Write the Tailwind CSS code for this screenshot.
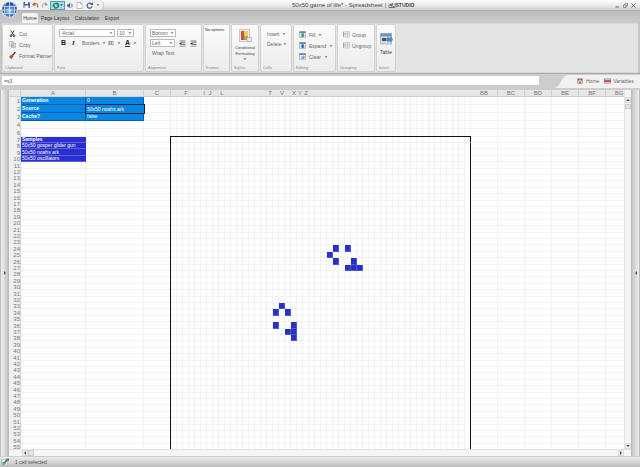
<!DOCTYPE html>
<html lang="en">
<head>
<meta charset="utf-8">
<title>50x50 game of life* - Spreadsheet</title>
<script src="https://cdn.jsdelivr.net/npm/@tailwindcss/browser@4"></script>
</head>
<body class="flex h-screen flex-col overflow-hidden bg-[#c6c6c6] font-['Liberation_Sans',Arial,sans-serif] text-[5px] leading-[6px] text-[#666]">
<svg class="hidden">
  <symbol id="down" viewBox="0 0 4 4"><path d="M.5 1.2h3L2 3z" fill="#777"/></symbol>
  <symbol id="indent" viewBox="0 0 12 12"><path d="M1 1h10v1.500H1zM5 4h6v1.500H5zM5 7h6v1.500H5zM1 10h10v1.300H1z" fill="#777"/><path d="M4.500 3.500v5.500L0 6.200z" fill="#444"/></symbol>
  <symbol id="pane" viewBox="0 0 16 16"><path d="M1 1h14v14H1z" fill="#f4f8fc" stroke="#6683a2"/><path d="M1 1h14v3.500H1z" fill="#5b80ac"/><path d="M5 4v11M10 4v11M1 8h14M1 12h14" stroke="#9fb3c8"/></symbol>
  <symbol id="grp" viewBox="0 0 16 16"><path d="M5 1h10v13H5zM5 5h10M5 9h10M10 1v13" fill="#fafafa" stroke="#999"/><path d="M3 2H1v11h2M1 7h3" fill="none" stroke="#666" stroke-width="1.300"/></symbol>
</svg>

<header class="relative shrink-0">
  <div class="flex h-[11px] items-center border-b border-[#adadad] bg-linear-to-b from-[#fdfdfd] via-[#ececec] to-[#cfcfcf]">
    <div class="flex h-[10px] w-[104px] items-center gap-[2px] rounded-r-full border-r border-[#c8c8c8] bg-[#f1f1f1] pl-[23px]">
      <button aria-label="Save"><svg class="h-[6px] w-[7px]" viewBox="0 0 14 12"><path d="M1 0h11l2 2v10H1z" fill="#4565ad"/><path d="M4 0h6v4H4zM3 7h8v5H3z" fill="#eef3fb"/></svg></button>
      <button aria-label="Undo"><svg class="h-[6px] w-[7px]" viewBox="0 0 14 12"><path d="M4 5c5-4 9 0 7 6" fill="none" stroke="#b5653a" stroke-width="2.500"/><path d="M0 6l5-6 2 8z" fill="#b5653a"/></svg></button>
      <button aria-label="Redo"><svg class="h-[6px] w-[7px]" viewBox="0 0 14 12"><path d="M10 5C5 1 1 5 3 11" fill="none" stroke="#999" stroke-width="2"/><path d="M14 6L9 0 7 8z" fill="#999"/></svg></button>
      <button class="flex h-[9px] w-[15px] items-center justify-center border border-[#4d9fb8] bg-[#a6dbe5]" aria-label="Refresh data"><svg class="h-[7px] w-[11px]" viewBox="0 0 18 12"><path d="M2 6c1-4 6-5 8-2M11 6c-1 5-6 5-8 3" fill="none" stroke="#26835d" stroke-width="2.500"/><path d="M9 1l4 5H7zM0 8l2-4 4 4z" fill="#26835d"/><path d="M14 4h4l-2 3z" fill="#333"/></svg></button>
      <div class="flex items-center gap-[3px]">
        <button aria-label="Play sound"><svg class="h-[5px] w-[6px]" viewBox="0 0 12 10"><path d="M0 3h2l4-3v10L2 7H0z" fill="#3b62a5"/><path d="M8 1c3 2 3 6 0 8" fill="none" stroke="#3b62a5" stroke-width="2"/></svg></button>
        <button aria-label="New"><svg class="h-[7px] w-[7px]" viewBox="0 0 12 14"><path d="M1 1h7l3 3v9H1z" fill="#fff" stroke="#888"/><path d="M8 1v3h3" fill="none" stroke="#888"/></svg></button>
        <button aria-label="Reload"><svg class="h-[7px] w-[7px]" viewBox="0 0 14 14"><path d="M11 4A5 5 0 1 0 12 9" fill="none" stroke="#4264a8" stroke-width="2.500"/><path d="M8 6h6V0z" fill="#4264a8"/></svg></button>
        <svg class="h-1 w-1"><use href="#down"/></svg>
      </div>
    </div>
    <h1 class="flex flex-1 items-center gap-[2px] pl-[188px] text-[6px] whitespace-nowrap text-[#444]"><span>50x50 game of life* - Spreadsheet</span><span>|</span><span class="flex items-center text-[5px] leading-[5px] font-bold"><span class="rounded-xs bg-[#666] text-white">CA</span>STUDIO</span></h1>
    <div class="flex items-center gap-[3px] pr-[4px]">
      <button aria-label="Minimize"><svg class="h-[5px] w-[5px]" viewBox="0 0 10 10"><path d="M1 8h7" stroke="#666" stroke-width="2"/></svg></button>
      <button aria-label="Restore"><svg class="h-[5px] w-[5px]" viewBox="0 0 10 10"><path d="M1 4h5v5H1zM4 4V1h5v5H6" fill="none" stroke="#666" stroke-width="1.300"/></svg></button>
      <button aria-label="Close"><svg class="h-[5px] w-[5px]" viewBox="0 0 10 10"><path d="M1 1l8 8M9 1L1 9" stroke="#666" stroke-width="2"/></svg></button>
    </div>
  </div>
  <nav class="flex h-[12px] items-end bg-linear-to-b from-[#bdbdbd] to-[#cbcbcb] pl-[22px] text-[#333]">
    <a href="#" class="flex h-[10px] w-[16px] items-center justify-center rounded-t-xs bg-[#f3f3f3]">Home</a>
    <a href="#" class="flex h-[10px] w-[34px] items-center justify-center whitespace-nowrap">Page Layout</a>
    <a href="#" class="flex h-[10px] w-[30px] items-center justify-center">Calculation</a>
    <a href="#" class="flex h-[10px] w-[20px] items-center justify-center">Export</a>
  </nav>
  <button class="absolute top-px left-px" aria-label="Application menu">
    <svg class="size-[17px]" viewBox="0 0 34 34"><defs><radialGradient id="g" cx=".5" cy=".6"><stop offset="0" stop-color="#aee6ff"/><stop offset=".6" stop-color="#477ed0"/><stop offset="1" stop-color="#2b4aa9"/></radialGradient></defs><circle cx="17" cy="17" r="16.500" fill="#d6dcea"/><circle cx="17" cy="17" r="14.500" fill="url(#g)"/><path d="M4 11h26M2 18h30M4 25h26M17 2v30M9 4c-3 9-3 17 0 26M25 4c3 9 3 17 0 26" fill="none" stroke="#dfe9fa" stroke-width="1.500"/></svg>
  </button>
</header>

<section class="mx-[2px] flex h-[50px] shrink-0 gap-px border-y border-[#d6d6d6] bg-[#e4e4e4]" aria-label="Ribbon">
  <div class="flex w-[51px] flex-col justify-between rounded-xs border border-[#d2d2d2] bg-linear-to-b from-[#fbfbfb] to-[#ececec]">
    <div class="flex flex-col pt-[3px] pl-[6px]">
      <button class="flex h-[11px] items-center gap-[3px]"><svg class="size-[7px]" viewBox="0 0 14 14"><path d="M4 1l5 9M10 1L5 10" stroke="#444" stroke-width="2"/><circle cx="4" cy="11.500" r="2" fill="none" stroke="#222" stroke-width="1.500"/><circle cx="10" cy="11.500" r="2" fill="none" stroke="#222" stroke-width="1.500"/></svg>Cut</button>
      <button class="flex h-[11px] items-center gap-[3px]"><svg class="size-[7px]" viewBox="0 0 14 14"><path d="M1 1h7v9H1zM5 4h8v9H5zM7 7h4M7 9h4M7 11h4" fill="#f2f2f2" stroke="#888"/></svg>Copy</button>
      <button class="flex h-[11px] items-center gap-[3px] whitespace-nowrap"><svg class="size-[7px]" viewBox="0 0 14 14"><path d="M13 0L7 7" stroke="#333" stroke-width="2.500"/><path d="M5 5l4 4-4 5-5-4z" fill="#a65432"/></svg>Format Painter</button>
    </div>
    <p class="pl-[2px] text-[4px] text-[#888]">Clipboard</p>
  </div>
  <div class="flex w-[90px] flex-col justify-between rounded-xs border border-[#d2d2d2] bg-linear-to-b from-[#fbfbfb] to-[#ececec]">
    <div class="flex flex-col gap-[2px] pt-[4px] pl-[4px]">
      <div class="flex gap-[2px]">
        <div class="flex h-[8px] w-[56px] items-center border border-[#bbb] bg-white pr-px"><select aria-label="Font" class="min-w-0 flex-1 appearance-none pl-[2px] text-[6px] leading-[6px]"><option>Arial</option></select><svg class="h-1 w-1"><use href="#down"/></svg></div>
        <div class="flex h-[8px] w-[17px] items-center border border-[#bbb] bg-white pr-px"><select aria-label="Font size" class="min-w-0 flex-1 appearance-none pl-px"><option>10</option></select><svg class="h-1 w-1"><use href="#down"/></svg></div>
      </div>
      <div class="flex h-[8px] items-center pl-[2px]">
        <button class="w-[11px] text-left text-[7px] font-black text-[#222]" aria-label="Bold">B</button>
        <button class="w-[10px] text-left font-['Liberation_Serif',serif] text-[7px] font-bold text-[#222] italic" aria-label="Italic">I</button>
        <button class="flex w-[26px] items-center gap-[2px]">Borders<svg class="h-1 w-1"><use href="#down"/></svg></button>
        <button class="flex w-[17px] items-center gap-[3px]" aria-label="Border style"><svg class="h-[5px] w-[6px]" viewBox="0 0 12 10"><path d="M0 1h12M0 4h12M0 7h12M3 0v8M7 0v8" stroke="#888" stroke-width="1.300"/></svg><svg class="h-1 w-1"><use href="#down"/></svg></button>
        <button class="flex items-center gap-[3px] text-[#222]" aria-label="Text color"><span class="border-b border-[#333] text-[7px] leading-[6px] font-bold">A</span><svg class="h-1 w-1"><use href="#down"/></svg></button>
      </div>
    </div>
    <p class="pl-[2px] text-[4px] text-[#888]">Font</p>
  </div>
  <div class="flex w-[57px] flex-col justify-between rounded-xs border border-[#d2d2d2] bg-linear-to-b from-[#fbfbfb] to-[#ececec]">
    <div class="flex flex-col gap-[2px] pt-[4px] pl-[4px]">
      <div class="flex h-[8px] w-[26px] items-center border border-[#bbb] bg-white pr-px"><select aria-label="Vertical alignment" class="min-w-0 flex-1 appearance-none pl-px"><option>Bottom</option></select><svg class="h-1 w-1"><use href="#down"/></svg></div>
      <div class="flex items-center gap-[4px]">
        <div class="flex h-[8px] w-[25px] items-center border border-[#bbb] bg-white pr-px"><select aria-label="Horizontal alignment" class="min-w-0 flex-1 appearance-none pl-px"><option>Left</option></select><svg class="h-1 w-1"><use href="#down"/></svg></div>
        <button aria-label="Decrease indent"><svg class="size-[7px]"><use href="#indent"/></svg></button>
        <button aria-label="Increase indent"><svg class="size-[7px]"><use href="#indent"/></svg></button>
      </div>
      <button class="h-[8px] pl-[2px] text-left">Wrap Text</button>
    </div>
    <p class="pl-[2px] text-[4px] text-[#888]">Alignment</p>
  </div>
  <div class="flex w-[27px] flex-col justify-between rounded-xs border border-[#d2d2d2] bg-linear-to-b from-[#fbfbfb] to-[#ececec]">
    <p class="pt-[2px] pl-px text-[4px] whitespace-nowrap text-[#333]">No options.</p>
    <p class="pl-[2px] text-[4px] text-[#888]">Format</p>
  </div>
  <div class="flex w-[28px] flex-col justify-between rounded-xs border border-[#d2d2d2] bg-linear-to-b from-[#fbfbfb] to-[#ececec]">
    <button class="flex flex-col items-center pt-[4px] text-[4px] leading-[6px] text-[#444]">
      <svg class="h-[14px] w-[13px]" viewBox="0 0 26 28"><path d="M1 1h20v24H1z" fill="#eef3f8" stroke="#999"/><path d="M4 4h6v18H4z" fill="#d8483c"/><path d="M10 4h8v10h-8z" fill="#f0d04c"/><path d="M10 14h8v8h-8z" fill="#b7a350"/><path d="M16 17h9v8h-9z" fill="#e9edf2" stroke="#889"/></svg>
      <span class="pt-[2px]">Conditional<br>Formatting</span><svg class="h-1 w-1"><use href="#down"/></svg>
    </button>
    <p class="pl-[2px] text-[4px] text-[#888]">Styles</p>
  </div>
  <div class="flex w-[32px] flex-col justify-between rounded-xs border border-[#d2d2d2] bg-linear-to-b from-[#fbfbfb] to-[#ececec]">
    <div class="flex flex-col pt-[4px] pl-[6px]">
      <button class="flex h-[10px] items-center gap-[2px]">Insert<svg class="h-1 w-1"><use href="#down"/></svg></button>
      <button class="flex h-[10px] items-center gap-[2px]">Delete<svg class="h-1 w-1"><use href="#down"/></svg></button>
    </div>
    <p class="pl-[2px] text-[4px] text-[#888]">Cells</p>
  </div>
  <div class="flex w-[43px] flex-col justify-between rounded-xs border border-[#d2d2d2] bg-linear-to-b from-[#fbfbfb] to-[#ececec]">
    <div class="flex flex-col pt-[4px] pl-[5px]">
      <button class="flex h-[11px] items-center gap-[3px]"><svg class="size-[7px]" viewBox="0 0 16 16"><use href="#pane"/><path d="M6 5h5v5h2l-4.500 5L4 10h2z" fill="#3da35a"/></svg>Fill<svg class="h-1 w-1"><use href="#down"/></svg></button>
      <button class="flex h-[11px] items-center gap-[3px]"><svg class="size-[7px]" viewBox="0 0 16 16"><use href="#pane"/><path d="M6 5h5v5h2l-4.500 5L4 10h2z" fill="#2874b8"/></svg>Expand<svg class="h-1 w-1"><use href="#down"/></svg></button>
      <button class="flex h-[11px] items-center gap-[3px]"><svg class="size-[7px]" viewBox="0 0 16 16"><use href="#pane"/><path d="M5 12l6-6 3 3-5 5z" fill="#8d94bd"/></svg>Clear<svg class="h-1 w-1"><use href="#down"/></svg></button>
    </div>
    <p class="pl-[2px] text-[4px] text-[#888]">Editing</p>
  </div>
  <div class="flex w-[38px] flex-col justify-between rounded-xs border border-[#d2d2d2] bg-linear-to-b from-[#fbfbfb] to-[#ececec]">
    <div class="flex flex-col pt-[4px] pl-[5px]">
      <button class="flex h-[11px] items-center gap-[2px]"><svg class="size-[7px]"><use href="#grp"/></svg>Group</button>
      <button class="flex h-[11px] items-center gap-[2px]"><svg class="size-[7px]"><use href="#grp"/></svg>Ungroup</button>
    </div>
    <p class="pl-[2px] text-[4px] text-[#888]">Grouping</p>
  </div>
  <div class="flex w-[20px] flex-col justify-between rounded-xs border border-[#d2d2d2] bg-linear-to-b from-[#fbfbfb] to-[#ececec]">
    <button class="flex flex-col items-center pt-[8px] text-[#444]"><svg class="h-[13px] w-[13px]" viewBox="0 0 26 26"><path d="M1 1h22v21H1z" fill="#d5e4f1" stroke="#6f8ca8"/><path d="M1 1h22v6H1z" fill="#6b94bf"/><path d="M1 14h22M8 7v15M15 7v15" stroke="#8da9c2"/><path d="M4 10h9v6H4z" fill="#555"/><path d="M14 9h7v-3l5 7-5 7v-3h-7z" fill="#478cc0"/></svg><span class="pt-[3px]">Table</span></button>
    <p class="pl-[2px] text-[4px] text-[#888]">Insert</p>
  </div>
</section>

<div class="flex h-[17px] shrink-0 items-start justify-between border-t border-[#aaa] bg-[#cdcdcd] pl-[2px]">
  <input aria-label="Formula" value="=s3" class="mt-[2px] h-[9px] min-w-0 flex-1 bg-white pl-[2px] text-[5px] text-[#555]">
  <div class="relative ml-[15px] flex h-[14px] w-[86px] items-center">
    <svg class="absolute inset-0 h-full w-full" viewBox="0 0 86 14" preserveAspectRatio="none"><path d="M0 14C6 14 8 1 14 1H86V14z" fill="#f1f1f1"/></svg>
    <a href="#" class="relative ml-[23px] flex items-center gap-[3px]"><svg class="h-[6px] w-[6px]" viewBox="0 0 12 12"><path d="M1 1h10v10H1z" fill="#8a5040"/><path d="M2 6l4-4 4 4v4H2z" fill="#dcc6b8"/><path d="M5 7h2v3H5z" fill="#444"/></svg>Home</a>
    <a href="#" class="relative ml-[5px] flex items-center gap-[2px]"><svg class="h-[6px] w-[7px]" viewBox="0 0 14 12"><path d="M0 1h14v10H0z" fill="#b88"/><path d="M0 5h14v2H0z" fill="#a33"/><path d="M2 3h10M2 9h10" stroke="#eee"/></svg>Variables</a>
  </div>
</div>

<main class="flex min-h-0 flex-1 bg-white">
  <button class="flex w-[9px] shrink-0 items-center justify-center border-x border-[#bbb] bg-linear-to-r from-[#f2f2f2] to-[#c4c4c4]" aria-label="Expand left panel"><svg class="h-1 w-1" viewBox="0 0 4 4"><path d="M1 0l2 2-2 2z" fill="#555"/></svg></button>
  <div class="flex min-w-0 flex-1 flex-col">
    <div class="flex min-h-0 flex-1">
      <div class="min-w-0 flex-1 overflow-hidden">
        <table id="sheet" class="w-[624px] table-fixed border-separate border-spacing-0"></table>
      </div>
      <div class="flex w-[7px] shrink-0 flex-col justify-between border-l border-[#e2e2e2] bg-[#f4f4f4] pt-[7px]">
        <div class="flex flex-col gap-px"><button class="flex h-[6px] items-center justify-center border border-[#ddd] bg-[#f0f0f0]" aria-label="Scroll up"><svg class="h-1 w-1" viewBox="0 0 4 4"><path d="M0 3l2-2 2 2z" fill="#555"/></svg></button><span class="h-[5px] border border-[#ccc] bg-[#e2e2e2]"></span></div>
        <button class="flex h-[6px] items-center justify-center border border-[#ddd] bg-[#f0f0f0]" aria-label="Scroll down"><svg class="h-1 w-1" viewBox="0 0 4 4"><path d="M0 1l2 2 2-2z" fill="#555"/></svg></button>
      </div>
    </div>
    <div class="flex h-[7px] shrink-0 items-center justify-between border-t border-[#e2e2e2] bg-[#f6f6f6] pr-[7px] pl-[13px]">
      <div class="flex"><button class="flex h-[6px] w-[6px] items-center justify-center border border-[#ddd] bg-[#eee]" aria-label="Scroll left"><svg class="h-1 w-1" viewBox="0 0 4 4"><path d="M3 0L1 2l2 2z" fill="#555"/></svg></button><span class="h-[6px] w-[6px] border border-[#ccc] bg-[#e8e8e8]"></span></div>
      <button class="flex h-[6px] w-[6px] items-center justify-center border border-[#ddd] bg-[#eee]" aria-label="Scroll right"><svg class="h-1 w-1" viewBox="0 0 4 4"><path d="M1 0l2 2-2 2z" fill="#555"/></svg></button>
    </div>
  </div>
  <button class="flex w-[9px] shrink-0 items-center justify-center border-x border-[#bbb] bg-linear-to-r from-[#c8c8c8] to-[#ededed]" aria-label="Expand right panel"><svg class="h-1 w-1" viewBox="0 0 4 4"><path d="M3 0L1 2l2 2z" fill="#555"/></svg></button>
</main>

<footer class="flex h-[11px] shrink-0 items-center gap-[6px] border-t border-[#ccc] bg-linear-to-b from-[#ebebeb] to-[#bdbdbd] pl-px">
  <svg class="size-[8px]" viewBox="0 0 16 16"><path d="M1 3h12v12H1z" fill="#e7eef2" stroke="#8aa"/><path d="M4 13l9-10" stroke="#356" stroke-width="2.500"/><path d="M3 8h6v5H3z" fill="#4fa16c"/><path d="M10 1h6v6z" fill="#3575a5"/></svg>
  <span class="text-[#555]">1 cell selected</span>
</footer>

<script>
// Column layout: header, A, B, C, the 50-column board (D..BA), then BB..BG.
const widths = [12, 65, 58, 27, ...Array(50).fill(6), ...Array(6).fill(27)];
const names = { 1: 'A', 2: 'B', 3: 'C', 6: 'F', 9: 'I', 10: 'J', 12: 'L', 20: 'T', 22: 'V', 24: 'X', 25: 'Y', 26: 'Z', 54: 'BB', 55: 'BC', 56: 'BD', 57: 'BE', 58: 'BF', 59: 'BG' };
const text = {
  1: ['Generation', '0'], 2: ['Source', '50x50 noahs ark'], 3: ['Cache?', 'false'],
  7: ['Samples'], 8: ['50x50 gosper glider gun'], 9: ['50x50 noahs ark'], 10: ['50x50 oscillators']
};
// Live cells, as board row -> board columns.
const live = { 17: [27, 29], 18: [26], 19: [27, 30], 20: [29, 30, 31], 26: [18], 27: [17, 19], 29: [17, 20], 30: [19, 20], 31: [20] };
const small = ['h-[6px]', 'h-[6px]', 'h-[7px]', 'h-[6px]', 'h-[7px]'];

let html = '<colgroup>' + widths.map(w => `<col style="width:${w}px">`).join('') + '</colgroup><thead><tr class="h-[7px]">';
widths.forEach((w, c) => {
  html += `<th class="h-[7px] overflow-visible border-b border-[#d0d0d0] bg-[#e6e6e6] p-0 text-[6px] leading-[6px] font-normal text-[#777] ${w > 6 ? 'border-r' : ''}"><div class="flex h-[6px] items-center justify-center">${names[c] || ''}</div></th>`;
});
html += '</tr></thead><tbody>';
for (let r = 1; r <= 55; r++) {
  if (r === 5) continue;
  const h = r < 7 ? 'h-[8px]' : small[(r - 7) % 5];
  html += `<tr class="${h}"><th class="border-r border-[#d8d8d8] bg-[#f0f0f0] p-0 font-normal text-[#777]"><div class="flex h-[6px] items-center justify-end text-[6px] leading-[6px]">${r}</div></th>`;
  for (let c = 1; c < widths.length; c++) {
    let k = 'border-r border-b border-[#f1f1f1]';
    const b = c - 4, br = r - 7, board = b >= 0 && b < 50 && br >= 0;
    if (board && (live[br] || []).includes(b)) k = 'border-r border-b border-[#4d57d8] bg-[#2732c4]';
    // The board's outline is drawn by its outermost cells.
    if (board && b === 0) k += br === 0 ? ' relative shadow-[-1px_0_0_#111,0_-1px_0_#111,-1px_-1px_0_#111]' : ' relative shadow-[-1px_0_0_#111]';
    else if (board && b === 49) k = 'relative border-b border-[#f1f1f1] border-r border-r-[#111] ' + (br === 0 ? 'shadow-[0_-1px_0_#111]' : 'shadow-[inset_-1px_0_0_#fff,0_1px_0_-1px_#111] border-b-0');
    else if (board && br === 0) k += ' shadow-[0_-1px_0_#111]';
    if (r < 4 && c < 3) k = 'border-r border-b border-[#0a5fae] bg-[#0a86e2] text-white' + (c === 1 ? ' font-bold' : '');
    if (r === 2 && c === 2) k = 'bg-[#0a86e2] text-white outline outline-[#052a50]';
    if (r >= 7 && r < 11 && c === 1) k = 'border-b border-[#5a62da] bg-[#2a2fcf] text-white' + (r === 7 ? ' font-bold' : '');
    const t = (text[r] || [])[c - 1];
    html += `<td class="p-0 ${k}">${t ? `<div class="flex h-[5px] items-center pl-px text-[5px] leading-[5px] whitespace-nowrap">${t}</div>` : ''}</td>`;
  }
  html += '</tr>';
}
document.getElementById('sheet').innerHTML = html + '</tbody>';
</script>
</body>
</html>
